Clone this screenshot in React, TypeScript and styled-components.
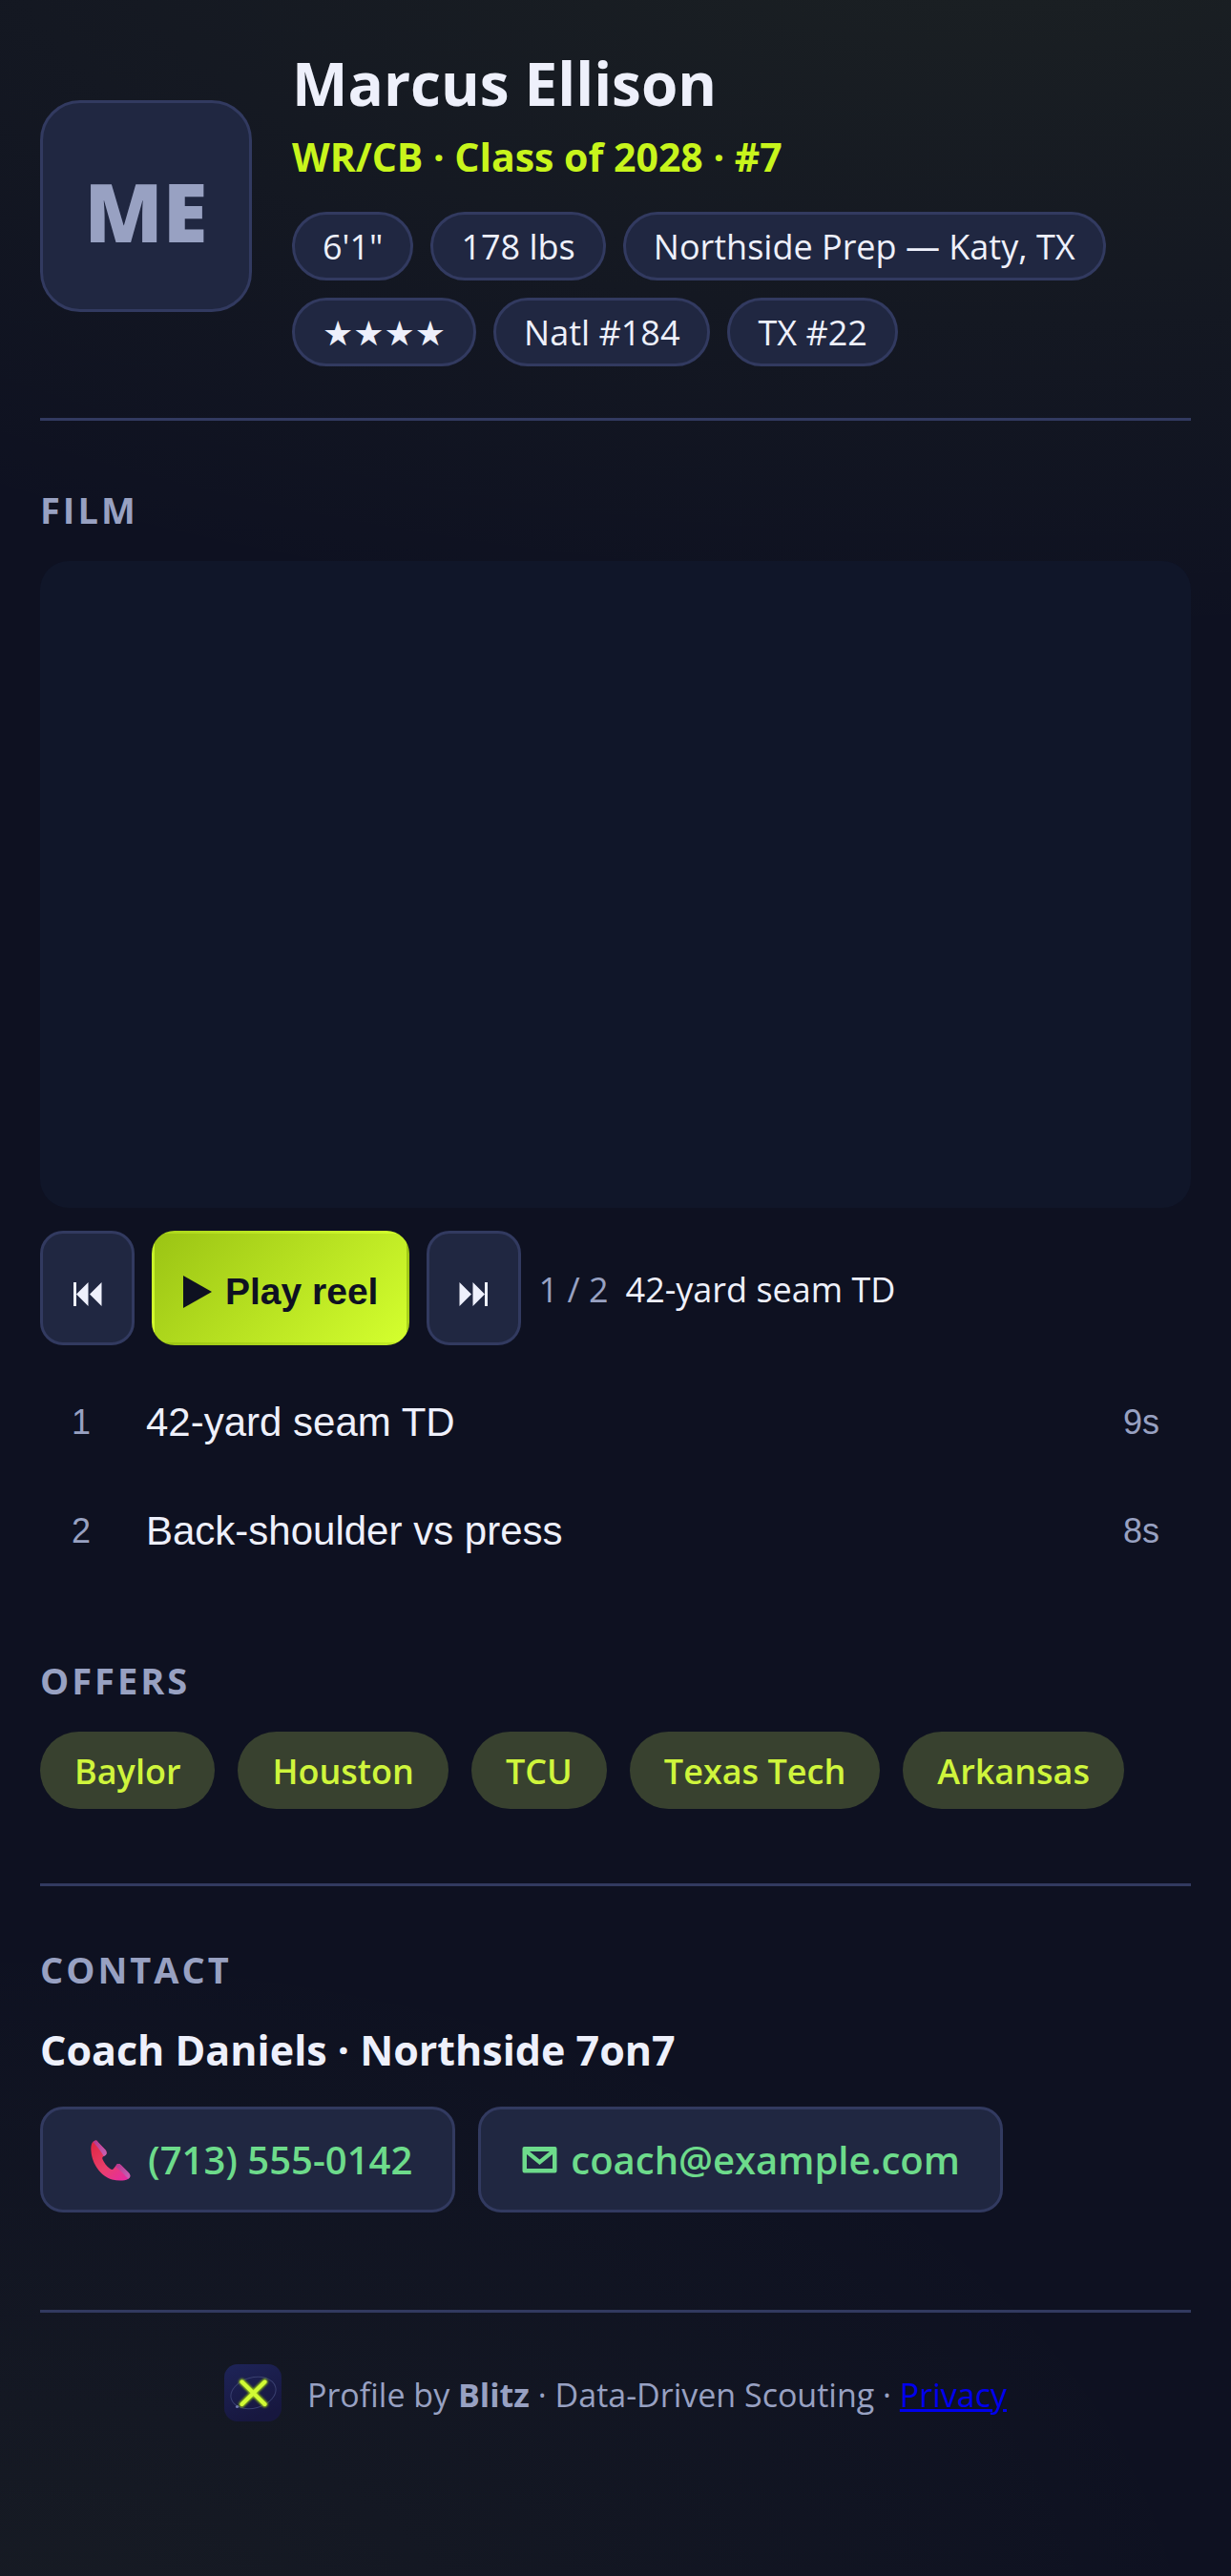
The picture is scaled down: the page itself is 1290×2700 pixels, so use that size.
import React, { useState } from 'react';
import styled, { createGlobalStyle, css } from 'styled-components';

const color = {
  base: '#0e1121',
  panel: '#202741',
  line: '#323a60',
  text: '#eef0fb',
  muted: '#98a1c2',
  lime: '#c8f51c',
  limeSoft: '#cff53c',
  limeTint: '#38412f',
  green: '#6ddb8b',
  film: '#101629',
};

const sans = "'Open Sans', 'Noto Sans', 'DejaVu Sans', sans-serif";
const controlFont = "'Liberation Sans', Arial, sans-serif";

const GlobalStyle = createGlobalStyle`
  *, *::before, *::after { box-sizing: border-box; }
  html { background: ${color.base}; }
  body { margin: 0; }
`;

const Page = styled.div`
  min-height: 100vh;
  padding: 48px 42px 150px;
  background:
    radial-gradient(ellipse 1860px 780px at 82% -4%, rgba(200, 235, 60, 0.075), transparent),
    radial-gradient(ellipse 1290px 780px at 0% 104%, rgba(190, 220, 90, 0.055), transparent),
    ${color.base};
  color: ${color.text};
  font-family: ${sans};
  font-size: 36px;
  line-height: 54px;
`;

const Header = styled.header`
  display: flex;
  align-items: center;
  gap: 42px;
  padding-bottom: 54px;
  border-bottom: 3px solid ${color.line};
`;

const Avatar = styled.div`
  display: flex;
  flex: none;
  align-items: center;
  justify-content: center;
  width: 222px;
  height: 222px;
  padding-top: 9px;
  border: 3px solid ${color.line};
  border-radius: 42px;
  background: ${color.panel};
  color: ${color.muted};
  font-size: 85px;
  font-weight: 800;
`;

const Identity = styled.div`
  flex: 1;
  min-width: 0;
`;

const Name = styled.h1`
  margin: 0 0 9px;
  font-size: 62px;
  font-weight: 700;
  line-height: 79px;
`;

const Position = styled.p`
  margin: 0 0 30px;
  color: ${color.lime};
  font-size: 41px;
  font-weight: 700;
  line-height: 56px;
`;

const Facts = styled.ul`
  display: flex;
  flex-wrap: wrap;
  gap: 18px;
  margin: 0;
  padding: 0;
  list-style: none;
`;

const Fact = styled.li`
  padding: 7px 29px 5px;
  border: 3px solid ${color.line};
  border-radius: 36px;
  background: ${color.panel};
`;

const Section = styled.section<{ $top: number; $bottom?: number; $ruled?: boolean }>`
  padding-top: ${(p) => p.$top}px;
  padding-bottom: ${(p) => p.$bottom ?? 0}px;
  ${(p) => p.$ruled && css`border-bottom: 3px solid ${color.line};`}
`;

const SectionTitle = styled.h2`
  margin: 0 0 27px;
  color: ${color.muted};
  font-size: 38px;
  font-weight: 700;
  letter-spacing: 3px;
  text-transform: uppercase;
`;

const Film = styled.div`
  aspect-ratio: 16 / 9;
  border-radius: 30px;
  background: ${color.film};
`;

const Controls = styled.div`
  display: flex;
  align-items: center;
  gap: 18px;
  margin-top: 24px;
`;

const ControlButton = styled.button<{ $primary?: boolean }>`
  display: flex;
  align-items: center;
  justify-content: center;
  gap: 14px;
  height: 120px;
  padding: 8px 30px 0;
  border: 3px solid ${(p) => (p.$primary ? 'transparent' : color.line)};
  border-radius: 24px;
  background: ${(p) => (p.$primary ? 'linear-gradient(135deg, #9bc414, #d4ff2e)' : color.panel)};
  color: ${(p) => (p.$primary ? color.base : color.text)};
  font-family: ${controlFont};
  font-size: 39px;
  font-weight: 700;
  cursor: pointer;
`;

const Glyph = styled.svg`
  display: block;
  flex: none;
  fill: currentColor;
`;

const NowPlaying = styled.p`
  display: flex;
  gap: 18px;
  margin: 0;
  padding-top: 3px;
`;

const Counter = styled.span`
  color: ${color.muted};
`;

const ClipList = styled.ol`
  margin: 24px 0 0;
  padding: 0;
  list-style: none;
`;

const ClipButton = styled.button`
  display: flex;
  align-items: center;
  gap: 30px;
  width: 100%;
  height: 114px;
  padding: 0 33px;
  border: 0;
  border-radius: 24px;
  background: transparent;
  color: ${color.text};
  font-family: ${controlFont};
  font-size: 42px;
  text-align: left;
  cursor: pointer;
`;

const ClipMeta = styled.span<{ $width?: number }>`
  flex: none;
  width: ${(p) => (p.$width ? `${p.$width}px` : 'auto')};
  color: ${color.muted};
  font-size: 36px;
`;

const ClipTitle = styled.span`
  flex: 1;
`;

const Offers = styled(Facts)`
  gap: 24px;
`;

const Offer = styled.li`
  padding: 15px 36px 12px;
  border-radius: 42px;
  background: ${color.limeTint};
  color: ${color.limeSoft};
  font-weight: 600;
`;

const ContactName = styled.p`
  margin: 0 0 28px;
  font-size: 43px;
  font-weight: 700;
  line-height: 62px;
`;

const ContactLinks = styled.div`
  display: flex;
  flex-wrap: wrap;
  gap: 24px;
`;

const ContactLink = styled.a`
  display: flex;
  align-items: center;
  gap: 14px;
  height: 111px;
  padding: 0 42px;
  border: 3px solid ${color.line};
  border-radius: 24px;
  background: ${color.panel};
  color: ${color.green};
  font-size: 40px;
  font-weight: 600;
  text-decoration: none;
`;

const Footer = styled.footer`
  display: flex;
  align-items: center;
  justify-content: center;
  gap: 27px;
  padding-top: 54px;
  color: ${color.muted};
`;

const Credit = styled.p`
  margin: 0;
  padding-top: 3px;
  font-size: 34px;
`;

const PrivacyLink = styled.a`
  color: #0000ee;
`;

const PreviousIcon = () => (
  <Glyph width="33" height="36" viewBox="0 0 33 36" aria-hidden="true">
    <path d="M2 8h3v25H2zM17.500 8v25L5 20.500zM31.500 8v25L19 20.500z" />
  </Glyph>
);

const NextIcon = () => (
  <Glyph width="33" height="36" viewBox="0 0 33 36" aria-hidden="true">
    <path d="M28 8h3v25h-3zM15.500 8v25L28 20.500zM1.500 8v25L14 20.500z" />
  </Glyph>
);

const PlayIcon = () => (
  <Glyph width="30" height="34" viewBox="0 0 30 34" aria-hidden="true">
    <path d="M0 0l30 17L0 34z" />
  </Glyph>
);

const PhoneIcon = () => (
  <Glyph width="54" height="48" viewBox="0 0 54 48" aria-hidden="true">
    <defs>
      <linearGradient id="handset" x1="8" y1="4" x2="46" y2="46" gradientUnits="userSpaceOnUse">
        <stop offset="0" stopColor="#e0243f" />
        <stop offset="0.55" stopColor="#ea3f6c" />
        <stop offset="1" stopColor="#e62aa6" />
      </linearGradient>
      <linearGradient id="caps" x1="0" y1="0" x2="1" y2="1">
        <stop offset="0" stopColor="#b5358c" />
        <stop offset="1" stopColor="#c766b8" />
      </linearGradient>
    </defs>
    <path
      fill="url(#handset)"
      d="M12 4C9 5 8 9 8.500 15c1 13 10 26 22 29.500 6 1.600 13 1.500 16.500-.5 3-2 3-4 1-6.500l-8-8c-2-2-4-1.800-5.200 0L32 33c-.8 1.200-2 1.200-3.500.2-4-3-6.500-6.500-8-10-.6-1.500-.2-2.400 1-3l2-1.200c1.500-1 1.500-3 .5-5L15.500 5C14.500 3.500 13.500 3.300 12 4z"
    />
    <path fill="url(#caps)" d="M12 4c1.500-.7 2.500-.5 3.500 1L24 14c1 2 1 4-.5 5l-1.800 1C19 15 15 10 10.500 5z" />
    <path fill="url(#caps)" d="M34.800 29.500c1.200-1.800 3.200-2 5.200 0l8 8c2 2.500 2 4.500-.5 6.200C44 40 39 34.500 34 31z" />
  </Glyph>
);

const MailIcon = () => (
  <Glyph width="38" height="28" viewBox="0 0 38 28" aria-hidden="true">
    <path
      fillRule="evenodd"
      d="M3.500 0h32A2 2 0 0 1 37.500 2v23.500a2 2 0 0 1-2 2h-32a2 2 0 0 1-2-2V2a2 2 0 0 1 2-2zM9 5l10.500 8.500L30 5zM6 8v15h27V8L19.500 19z"
    />
  </Glyph>
);

const BlitzLogo = () => (
  <Glyph width="60" height="60" viewBox="0 0 60 60" role="img" aria-label="Blitz">
    <defs>
      <linearGradient id="tile" x1="0" y1="0" x2="0.4" y2="1">
        <stop offset="0" stopColor="#1e2458" />
        <stop offset="1" stopColor="#17173f" />
      </linearGradient>
      <filter id="glow" x="-30%" y="-30%" width="160%" height="160%">
        <feGaussianBlur stdDeviation="1.300" />
      </filter>
    </defs>
    <rect width="60" height="60" rx="14" fill="url(#tile)" />
    <ellipse cx="30.500" cy="30" rx="24" ry="16" transform="rotate(-15 30.500 30)" fill="none" stroke="#3a4070" strokeWidth="1" />
    <circle cx="13.500" cy="44.500" r="1.600" fill="#7079ae" />
    <path d="M18.500 18.500l24 23.500M42.500 18.500l-24 23.500" stroke="#9ccc12" strokeWidth="6" strokeLinecap="round" filter="url(#glow)" />
    <path d="M18.500 18.500l24 23.500M42.500 18.500l-24 23.500" stroke="#d2fb35" strokeWidth="4" strokeLinecap="round" />
  </Glyph>
);

const facts = ['6\'1"', '178 lbs', 'Northside Prep — Katy, TX', '★★★★', 'Natl #184', 'TX #22'];
const clips = [
  { title: '42-yard seam TD', seconds: 9 },
  { title: 'Back-shoulder vs press', seconds: 8 },
];
const offers = ['Baylor', 'Houston', 'TCU', 'Texas Tech', 'Arkansas'];

export default function App() {
  const [current, setCurrent] = useState(0);
  const step = (by: number) => setCurrent((i) => (i + by + clips.length) % clips.length);

  return (
    <>
      <GlobalStyle />
      <Page>
        <Header>
          <Avatar>ME</Avatar>
          <Identity>
            <Name>Marcus Ellison</Name>
            <Position>WR/CB · Class of 2028 · #7</Position>
            <Facts>
              {facts.map((fact) => (
                <Fact key={fact}>{fact}</Fact>
              ))}
            </Facts>
          </Identity>
        </Header>

        <main>
          <Section $top={66}>
            <SectionTitle>Film</SectionTitle>
            <Film />
            <Controls>
              <ControlButton type="button" aria-label="Previous clip" onClick={() => step(-1)}>
                <PreviousIcon />
              </ControlButton>
              <ControlButton type="button" $primary>
                <PlayIcon />
                Play reel
              </ControlButton>
              <ControlButton type="button" aria-label="Next clip" onClick={() => step(1)}>
                <NextIcon />
              </ControlButton>
              <NowPlaying>
                <Counter>
                  {current + 1} / {clips.length}
                </Counter>
                <span>{clips[current].title}</span>
              </NowPlaying>
            </Controls>
            <ClipList>
              {clips.map((clip, i) => (
                <li key={clip.title}>
                  <ClipButton type="button" onClick={() => setCurrent(i)}>
                    <ClipMeta $width={48}>{i + 1}</ClipMeta>
                    <ClipTitle>{clip.title}</ClipTitle>
                    <ClipMeta>{clip.seconds}s</ClipMeta>
                  </ClipButton>
                </li>
              ))}
            </ClipList>
          </Section>

          <Section $top={72} $bottom={78} $ruled>
            <SectionTitle>Offers</SectionTitle>
            <Offers>
              {offers.map((school) => (
                <Offer key={school}>{school}</Offer>
              ))}
            </Offers>
          </Section>

          <Section $top={60} $bottom={102} $ruled>
            <SectionTitle>Contact</SectionTitle>
            <ContactName>Coach Daniels · Northside 7on7</ContactName>
            <ContactLinks>
              <ContactLink href="tel:+17135550142">
                <PhoneIcon />
                (713) 555-0142
              </ContactLink>
              <ContactLink href="mailto:coach@example.com">
                <MailIcon />
                coach@example.com
              </ContactLink>
            </ContactLinks>
          </Section>
        </main>

        <Footer>
          <BlitzLogo />
          <Credit>
            Profile by <strong>Blitz</strong> · Data-Driven Scouting · <PrivacyLink href="#privacy">Privacy</PrivacyLink>
          </Credit>
        </Footer>
      </Page>
    </>
  );
}
